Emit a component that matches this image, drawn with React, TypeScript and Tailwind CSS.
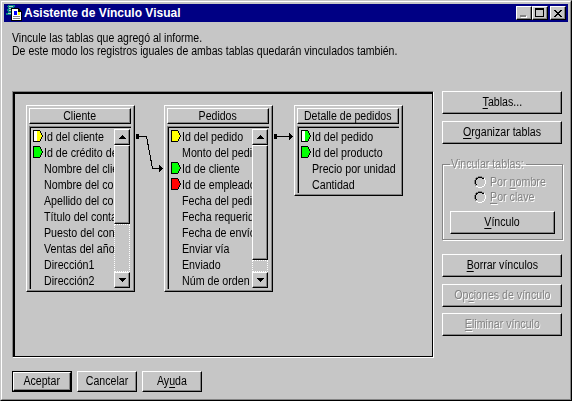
import React from "react";

type Tag = { color: string; half?: boolean };
type Field = { label: string; tag?: Tag };

const YELLOW = "#ffff00";
const GREEN = "#00ff00";
const RED = "#ff0000";

const raised =
  "border border-t-white border-l-white border-r-black border-b-black shadow-[inset_-1px_-1px_0_#848484]";

function KeyTag({ color, half }: Tag) {
  return (
    <svg width="10" height="12" viewBox="0 0 10 12" shapeRendering="crispEdges" className="block">
      <path d="M0 0H7V1H8V3H9V5H10V7H9V9H8V11H7V12H0Z" fill="#000" />
      <path d="M1 1H7V3H8V5H9V7H8V9H7V11H1Z" fill={color} />
      {half && <rect x="1" y="1" width="3" height="10" fill="#fff" />}
    </svg>
  );
}

function Arrow({ down }: { down?: boolean }) {
  return (
    <svg width="7" height="4" viewBox="0 0 7 4" shapeRendering="crispEdges" className="block">
      <path d={down ? "M0 0H7V1H6V2H5V3H4V4H3V3H2V2H1V1H0Z" : "M3 0H4V1H5V2H6V3H7V4H0V3H1V2H2V1H3Z"} fill="#000" />
    </svg>
  );
}

function ScrollBar({ thumb }: { thumb: string }) {
  return (
    <div className="flex h-[159px] w-4 shrink-0 flex-col">
      <div className={`flex h-4 items-center justify-center ${raised}`}><Arrow /></div>
      <div className={`${raised} ${thumb}`} />
      <div className="flex-1 border border-dotted border-white" />
      <div className={`flex h-4 items-center justify-center ${raised}`}><Arrow down /></div>
    </div>
  );
}

function TableBox({ title, fields, thumb, height }: { title: string; fields: Field[]; thumb?: string; height: string }) {
  return (
    <div className={`w-[109px] shrink-0 pt-[2px] pr-[3px] pl-[2px] ${raised} ${height}`}>
      <div className={`flex h-4 items-center justify-center ${raised}`}>
        <span className="scale-x-[0.88] whitespace-nowrap">{title}</span>
      </div>
      <div className="mt-[2px] border-t border-l border-[#848484]">
        <div className="flex border-t border-l border-black pt-px pr-px">
          <div className="min-w-0 flex-1 overflow-hidden">
            {fields.map((f) => (
              <div key={f.label} className="flex h-4 items-start pt-px pl-[2px]">
                <div className="mr-px w-[10px] shrink-0">{f.tag && <KeyTag {...f.tag} />}</div>
                <span className="mt-px origin-left scale-x-[0.89] whitespace-nowrap">{f.label}</span>
              </div>
            ))}
          </div>
          {thumb && <ScrollBar thumb={thumb} />}
        </div>
      </div>
    </div>
  );
}

function Button({ pre = "", hot = "", post = "", size, disabled, isDefault }: { pre?: string; hot?: string; post?: string; size: string; disabled?: boolean; isDefault?: boolean }) {
  return (
    <div className={`flex shrink-0 items-center justify-center ${size} ${isDefault ? "border border-black" : ""}`}>
      <div className={`flex h-full w-full items-center justify-center ${raised}`}>
        <span className={`scale-x-[0.885] whitespace-nowrap ${disabled ? "text-[#848484] [text-shadow:1px_1px_0_#fff]" : ""}`}>
          {pre}<u className="underline-offset-2">{hot}</u>{post}
        </span>
      </div>
    </div>
  );
}

function Radio({ pre = "", hot, post }: { pre?: string; hot: string; post: string }) {
  return (
    <div className="flex h-[14px] items-center">
      <svg width="12" height="12" viewBox="0 0 12 12" shapeRendering="crispEdges" className="mr-1">
        <path d="M4 0H8V1H4ZM2 1H4V2H2ZM8 1H10V2H8ZM1 2H2V4H1ZM0 4H1V8H0ZM1 8H2V10H1Z" fill="#848484" />
        <path d="M4 1H8V2H4ZM2 2H4V3H2ZM8 2H10V3H8ZM2 3H3V4H2ZM1 4H2V8H1ZM2 8H3V9H2Z" fill="#000" />
        <path d="M10 2H11V4H10ZM11 4H12V8H11ZM10 8H11V10H10ZM8 10H10V11H8ZM4 11H8V12H4ZM2 10H4V11H2Z" fill="#fff" />
      </svg>
      <span className="origin-left scale-x-[0.89] whitespace-nowrap text-[#848484] [text-shadow:1px_1px_0_#fff]">
        {pre}<u className="underline-offset-2">{hot}</u>{post}
      </span>
    </div>
  );
}

function StraightLink() {
  return (
    <svg width="21" height="60" viewBox="0 0 21 60" shapeRendering="crispEdges" className="block shrink-0">
      <path d="M1 29H4V31H16V28H17V29H18V30H19V31H20V32H19V33H18V34H17V35H16V32H4V34H1Z" fill="#000" />
    </svg>
  );
}

function StepLink() {
  return (
    <svg width="29" height="80" viewBox="0 0 29 80" shapeRendering="crispEdges" className="block shrink-0">
      <rect x="1" y="29" width="3" height="5" fill="#000" />
      <path d="M4 31.5H11.5L17.5 63.5H24" fill="none" stroke="#000" />
      <path d="M24 60H25V61H26V62H27V63H28V64H27V65H26V66H25V67H24Z" fill="#000" />
    </svg>
  );
}

const cliente: Field[] = [
  { label: "Id del cliente", tag: { color: YELLOW, half: true } },
  { label: "Id de crédito del", tag: { color: GREEN } },
  { label: "Nombre del cliente" },
  { label: "Nombre del contacto" },
  { label: "Apellido del contacto" },
  { label: "Título del contacto" },
  { label: "Puesto del contacto" },
  { label: "Ventas del año" },
  { label: "Dirección1" },
  { label: "Dirección2" },
];
const pedidos: Field[] = [
  { label: "Id del pedido", tag: { color: YELLOW } },
  { label: "Monto del pedido" },
  { label: "Id de cliente", tag: { color: GREEN } },
  { label: "Id de empleado", tag: { color: RED } },
  { label: "Fecha del pedido" },
  { label: "Fecha requerida" },
  { label: "Fecha de envío" },
  { label: "Enviar vía" },
  { label: "Enviado" },
  { label: "Núm de orden" },
];
const detalle: Field[] = [
  { label: "Id del pedido", tag: { color: GREEN, half: true } },
  { label: "Id del producto", tag: { color: GREEN } },
  { label: "Precio por unidad" },
  { label: "Cantidad" },
];

function TitleBar() {
  return (
    <div className="flex h-[18px] items-center bg-[#000084] pr-[2px] pl-[2px]">
      <svg width="16" height="16" viewBox="0 0 16 16" shapeRendering="crispEdges" className="shrink-0">
        <path d="M2 0H9V2H8V7H7V9H6V10H0V8H2V6H1V4H2V2H1V1H2Z" fill="#008484" />
        <path d="M3 1H7V2H3ZM3 3H7V4H3ZM3 5H7V6H3ZM2 8H5V9H2Z" fill="#c6c6c6" />
        <path d="M5 3H13V4H14V5H15V6H16V16H5Z" fill="#000" />
        <path d="M6 4H12V7H15V15H6Z" fill="#fff" />
        <rect x="8" y="6" width="3" height="4" fill="#0000ff" />
        <rect x="12" y="7" width="2" height="3" fill="#ffff00" />
        <path d="M7 11H14V12H7ZM7 13H14V14H7Z" fill="#848484" />
      </svg>
      <span className="ml-[2px] flex-1 text-[12px] leading-none font-bold whitespace-nowrap text-white">Asistente de Vínculo Visual</span>
      <div className={`flex h-[14px] w-4 bg-[#c6c6c6] pt-[8px] pl-[3px] ${raised}`}>
        <div className="h-[2px] w-[6px] bg-[#848484] shadow-[1px_1px_0_#fff]" />
      </div>
      <div className={`h-[14px] w-4 bg-[#c6c6c6] pt-px pl-[2px] ${raised}`}>
        <div className="h-[9px] w-[9px] border border-t-2 border-black" />
      </div>
      <div className={`ml-[2px] flex h-[14px] w-4 items-center justify-center bg-[#c6c6c6] ${raised}`}>
        <svg width="8" height="7" viewBox="0 0 8 7" shapeRendering="crispEdges">
          <path d="M0 0H2V1H3V2H5V1H6V0H8V1H7V2H6V3H5V4H6V5H7V6H8V7H6V6H5V5H3V6H2V7H0V6H1V5H2V4H3V3H2V2H1V1H0Z" fill="#000" />
        </svg>
      </div>
    </div>
  );
}

export default function App() {
  return (
    <div className="h-[401px] w-[572px] overflow-hidden border border-t-[#c6c6c6] border-r-black border-b-black border-l-[#c6c6c6] bg-[#c6c6c6] font-['Liberation_Sans',Arial,sans-serif] text-[12px] leading-[13px] text-black">
      <div className="flex h-full flex-col border border-t-white border-r-[#848484] border-b-[#848484] border-l-white p-[2px]">
        <TitleBar />
        <div className="mt-[10px] ml-2 h-[59px] whitespace-nowrap">
          <p className="origin-left scale-x-[0.878]">Vincule las tablas que agregó al informe.</p>
          <p className="origin-left scale-x-[0.878]">De este modo los registros iguales de ambas tablas quedarán vinculados también.</p>
        </div>
        <div className="ml-2 flex">
          <div className="h-[267px] w-[422px] shrink-0 border border-t-[#848484] border-r-white border-b-white border-l-[#848484]">
            <div className="flex h-full items-start border-2 border-r border-b border-black pt-[11px] pl-[11px]">
              <TableBox title="Cliente" fields={cliente} thumb="h-[79px]" height="h-[187px]" />
              <StepLink />
              <TableBox title="Pedidos" fields={pedidos} thumb="h-[115px]" height="h-[187px]" />
              <StraightLink />
              <TableBox title="Detalle de pedidos" fields={detalle} height="h-[91px]" />
            </div>
          </div>
          <div className="ml-2 w-[120px]">
            <Button size="h-[23px] w-[120px]" hot="T" post="ablas..." />
            <Button size="mt-[7px] h-[23px] w-[120px]" hot="O" post="rganizar tablas" />
            <fieldset className="mt-[14px] h-[82px] w-[119px] border border-[#848484] px-[7px] shadow-[1px_1px_0_#fff,inset_1px_1px_0_#fff]">
              <legend className="w-[76px] pl-px text-[#848484] [text-shadow:1px_1px_0_#fff]">
                <span className="block origin-left scale-x-[0.89] whitespace-nowrap">Vincular tablas:</span>
              </legend>
              <div className="mt-1 ml-[24px] flex flex-col gap-px">
                <Radio pre="Por " hot="n" post="ombre" />
                <Radio hot="P" post="or clave" />
              </div>
              <Button size="mt-[7px] h-[23px] w-[105px]" hot="V" post="ínculo" />
            </fieldset>
            <Button size="mt-[14px] h-[23px] w-[120px]" hot="B" post="orrar vínculos" />
            <Button size="mt-[7px] h-[23px] w-[120px]" pre="Op" hot="c" post="iones de vínculo" disabled />
            <Button size="mt-[6px] h-[23px] w-[120px]" hot="E" post="liminar vínculo" disabled />
          </div>
        </div>
        <div className="mt-[13px] ml-2 flex gap-[5px]">
          <Button size="h-[21px] w-[60px]" pre="Aceptar" isDefault />
          <Button size="h-[21px] w-[60px]" pre="Cancelar" />
          <Button size="h-[21px] w-[60px]" pre="Ay" hot="u" post="da" />
        </div>
      </div>
    </div>
  );
}
